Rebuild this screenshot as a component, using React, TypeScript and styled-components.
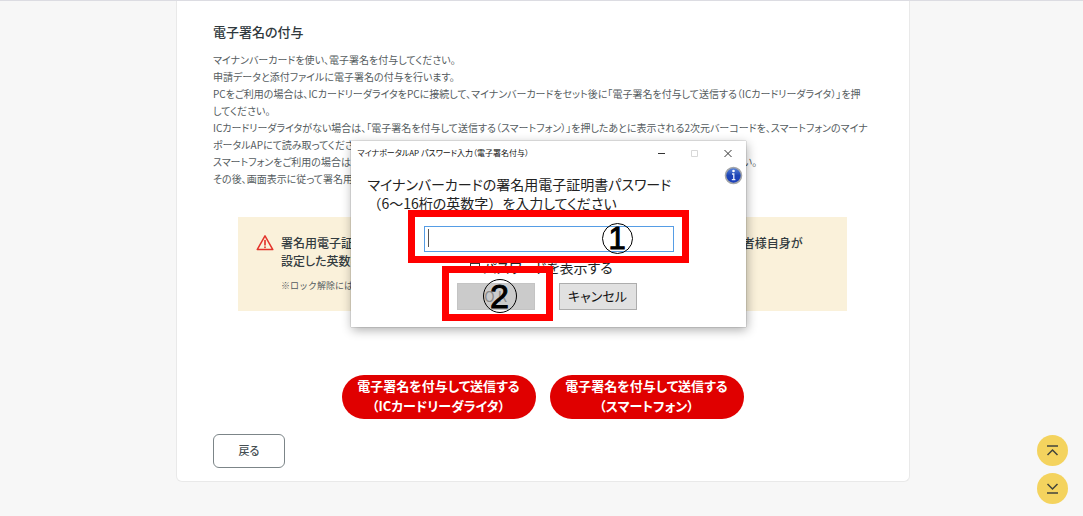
import React from "react";
import styled, { createGlobalStyle } from "styled-components";

const GlobalStyle = createGlobalStyle`
  *, *::before, *::after { box-sizing: border-box; }
  body {
    margin: 0;
    background: #f7f7f7;
    color: #555c60;
    font-family: "Noto Sans CJK JP", sans-serif;
    font-feature-settings: "palt";
  }
  button, input { font: inherit; font-feature-settings: inherit; }
  h1, h2, p { margin: 0; }
`;

const Page = styled.div`
  position: relative;
  min-height: 100vh;
  padding: 0 0 35px 3px;
  border-top: 1px solid #dcdce2;
`;

const Card = styled.main`
  max-width: 734px;
  margin: 0 auto;
  padding: 19px 37px 13px 36px;
  background: #fff;
  border: 1px solid #e9e9e9;
  border-top: 0;
  border-radius: 0 0 6px 6px;
`;

const Heading = styled.h1`
  margin-bottom: 8px;
  font-size: 13px;
  line-height: 23px;
  font-weight: 500;
  color: #2f383d;
`;

const Lead = styled.p`
  font-size: 10px;
  line-height: 17px;
  white-space: nowrap;
`;

const Notice = styled.section`
  display: flex;
  gap: 7px;
  margin: 30px 25px 64px;
  padding: 17px 18px 16px;
  min-height: 94px;
  background: #faf1da;
  color: #333c40;
  white-space: nowrap;
`;

const NoticeTitle = styled.p`
  font-size: 12px;
  line-height: 18px;
  font-weight: 500;
`;

const NoticeNote = styled.p`
  margin-top: 9px;
  font-size: 9px;
  line-height: 14px;
  font-feature-settings: normal;
  color: #555c60;
`;

const Actions = styled.div`
  display: flex;
  justify-content: center;
  gap: 14px;
`;

const SendButton = styled.button`
  width: 194px;
  height: 44px;
  padding: 0 0 2px;
  border: 0;
  border-radius: 22px;
  background: #e00000;
  color: #fff;
  font-size: 13px;
  line-height: 20px;
  font-weight: 700;
`;

const BackButton = styled.button`
  display: block;
  width: 72px;
  height: 34px;
  margin-top: 15px;
  padding: 0 0 2px;
  border: 1px solid #7c8588;
  border-radius: 6px;
  background: #fff;
  color: #454e52;
  font-size: 11px;
  font-weight: 500;
`;

const Floating = styled.nav`
  position: fixed;
  right: 15px;
  bottom: 12px;
  display: flex;
  flex-direction: column;
  gap: 7px;
`;

const RoundButton = styled.button`
  display: flex;
  align-items: center;
  justify-content: center;
  width: 31px;
  height: 31px;
  padding: 0;
  border: 0;
  border-radius: 50%;
  background: #f4d35e;
`;

const Dialog = styled.section`
  position: absolute;
  top: 140px;
  left: calc(50% - 191px);
  width: 395px;
  height: 186px;
  background: #fff;
  color: #222;
  box-shadow: 1px 3px 10px rgba(0, 0, 0, 0.32), 0 0 1px rgba(0, 0, 0, 0.5);
`;

const TitleBar = styled.header`
  display: flex;
  align-items: center;
  justify-content: space-between;
  height: 24px;
  padding: 0 13px 0 7px;
`;

const DialogTitle = styled.h2`
  font-size: 8px;
  line-height: 12px;
  font-weight: 400;
  color: #111;
`;

const WindowButtons = styled.div`
  display: flex;
  gap: 23px;
`;

const WindowButton = styled.button`
  display: flex;
  padding: 0;
  border: 0;
  background: none;
`;

const InfoButton = styled.button`
  position: absolute;
  top: 25px;
  right: 3px;
  display: flex;
  padding: 0;
  border: 0;
  background: none;
`;

const Form = styled.form`
  display: flex;
  flex-direction: column;
  padding: 10px 17px 0;
`;

const Prompt = styled.label`
  font-size: 14px;
  line-height: 19px;
  white-space: pre;
`;

const FullWidth = styled.span`
  font-feature-settings: normal;
`;

const PasswordField = styled.div`
  position: relative;
  width: 250px;
  margin: 13px 0 7px 56px;
`;

const PasswordInput = styled.input`
  display: block;
  width: 100%;
  height: 26px;
  padding: 0 6px;
  border: 1px solid #569de5;
  background: #fff;
  font-size: 15px;
  outline: 0;
`;

const Caret = styled.span`
  position: absolute;
  top: 3px;
  left: 4px;
  width: 1px;
  height: 18px;
  background: #555;
`;

const ShowPassword = styled.label`
  display: flex;
  align-items: center;
  gap: 4px;
  margin-left: 102px;
  font-size: 14px;
  line-height: 17px;
`;

const Checkbox = styled.input`
  appearance: none;
  width: 10px;
  height: 10px;
  margin: 0;
  border: 1px solid #333;
  background: #fff;
`;

const DialogActions = styled.div`
  display: flex;
  gap: 24px;
  margin: 7px 0 0 89px;
`;

const DialogButton = styled.button`
  width: 78px;
  height: 27px;
  padding: 0 0 2px;
  border: 1px solid #adadad;
  background: #e1e1e1;
  color: #111;
  font-size: 13px;
  line-height: 20px;
  &:disabled {
    border-color: #c4c4c4;
    background: #cbcbcb;
    color: #8a8a8a;
    font-size: 14px;
  }
`;

const Highlight = styled.div<{ $x: number; $y: number; $w: number; $h: number }>`
  position: absolute;
  left: ${(p) => p.$x}px;
  top: ${(p) => p.$y}px;
  width: ${(p) => p.$w}px;
  height: ${(p) => p.$h}px;
  border: 7px solid #f00;
  pointer-events: none;
`;

const StepNumber = styled.span<{ $x: number; $y: number; $size: number }>`
  position: absolute;
  left: ${(p) => p.$x}px;
  top: ${(p) => p.$y}px;
  display: flex;
  align-items: center;
  justify-content: center;
  width: ${(p) => p.$size}px;
  height: ${(p) => p.$size}px;
  border: 1px solid #000;
  border-radius: 50%;
  color: #000;
  font-family: "Liberation Sans", sans-serif;
  font-size: ${(p) => p.$size}px;
  line-height: 1;
  -webkit-text-stroke: 1px #000;
  pointer-events: none;
`;

const WarningIcon = () => (
  <svg width="18" height="17" viewBox="0 0 18 17" fill="none" stroke="#e3342b" strokeLinecap="round" strokeLinejoin="round">
    <path d="M9 1.800 16.800 15.600H1.200Z" strokeWidth="1.500" />
    <path d="M9 6.500v4.300" strokeWidth="1.700" />
    <path d="M9 13.200v.1" strokeWidth="1.800" />
  </svg>
);

const InfoIcon = () => (
  <svg width="19" height="19" viewBox="0 0 19 19">
    <defs>
      <linearGradient id="info" x1="0" y1="0" x2="0" y2="1">
        <stop offset="0" stopColor="#5d88dc" />
        <stop offset="0.5" stopColor="#1d45b5" />
        <stop offset="1" stopColor="#1c3fbd" />
      </linearGradient>
    </defs>
    <circle cx="9.5" cy="9.5" r="8" fill="url(#info)" stroke="#a3a5a8" strokeWidth="1.6" />
    <circle cx="9.5" cy="5" r="1.3" fill="#fff" />
    <path d="M8 8h1.800v5.400M7.800 13.600h3.600" fill="none" stroke="#e8eefc" strokeWidth="1.300" />
  </svg>
);

export default function App() {
  return (
    <>
      <GlobalStyle />
      <Page>
        <Card>
          <Heading>電子署名の付与</Heading>
          <Lead>
            マイナンバーカードを使い、電子署名を付与してください。<br />
            申請データと添付ファイルに電子署名の付与を行います。<br />
            PCをご利用の場合は、ICカードリーダライタをPCに接続して、マイナンバーカードをセット後に「電子署名を付与して送信する（ICカードリーダライタ）」を押<br />
            してください。<br />
            ICカードリーダライタがない場合は、「電子署名を付与して送信する（スマートフォン）」を押したあとに表示される2次元バーコードを、スマートフォンのマイナ<br />
            ポータルAPにて読み取ってください。<br />
            スマートフォンをご利用の場合は、「電子署名を付与して送信する（スマートフォン）」を押し、マイナポータルAPを起動してください。<br />
            その後、画面表示に従って署名用電子証明書の読み取りを行います。
          </Lead>
          <Notice>
            <WarningIcon />
            <div>
              <NoticeTitle>
                署名用電子証明書のパスワードは、マイナンバーカードのお受取時に市区町村窓口で、申請者様自身が<br />
                設定した英数字6～16桁の文字列です。
              </NoticeTitle>
              <NoticeNote>※ロック解除には市区町村窓口での手続きが必要です。</NoticeNote>
            </div>
          </Notice>
          <Actions>
            <SendButton>電子署名を付与して送信する<br />（ICカードリーダライタ）</SendButton>
            <SendButton>電子署名を付与して送信する<br />（スマートフォン）</SendButton>
          </Actions>
          <BackButton>戻る</BackButton>
        </Card>

        <Dialog role="dialog" aria-labelledby="dialog-title">
          <TitleBar>
            <DialogTitle id="dialog-title">マイナポータルAP パスワード入力（電子署名付与）</DialogTitle>
            <WindowButtons>
              <WindowButton aria-label="最小化">
                <svg width="10" height="10" viewBox="0 0 10 10" stroke="#333"><path d="M1 5.500h7" /></svg>
              </WindowButton>
              <WindowButton aria-label="最大化" disabled>
                <svg width="10" height="10" viewBox="0 0 10 10" fill="none" stroke="#d8d8d8"><path d="M1.500 2.500h6v6h-6z" /></svg>
              </WindowButton>
              <WindowButton aria-label="閉じる">
                <svg width="10" height="10" viewBox="0 0 10 10" stroke="#333"><path d="M1.500 2l7 7M8.500 2l-7 7" /></svg>
              </WindowButton>
            </WindowButtons>
          </TitleBar>
          <InfoButton aria-label="情報"><InfoIcon /></InfoButton>
          <Form onSubmit={(e) => e.preventDefault()}>
            <Prompt htmlFor="password">
              マイナンバーカードの署名用電子証明書パスワード<br />
              <FullWidth>（</FullWidth>6～16桁の英数字<FullWidth>）</FullWidth>を入力してください
            </Prompt>
            <PasswordField>
              <PasswordInput id="password" type="password" />
              <Caret />
            </PasswordField>
            <ShowPassword>
              <Checkbox type="checkbox" />
              パスワードを表示する
            </ShowPassword>
            <DialogActions>
              <DialogButton disabled>O K</DialogButton>
              <DialogButton type="button">キャンセル</DialogButton>
            </DialogActions>
          </Form>
          <Highlight $x={57} $y={69} $w={281} $h={53} />
          <Highlight $x={91} $y={125} $w={111} $h={55} />
          <StepNumber $x={251} $y={82} $size={31}>1</StepNumber>
          <StepNumber $x={132} $y={138} $size={34}>2</StepNumber>
        </Dialog>

        <Floating aria-label="ページ内移動">
          <RoundButton aria-label="ページの先頭へ">
            <svg width="13" height="13" viewBox="0 0 13 13" fill="none" stroke="#42443c" strokeWidth="1.5"><path d="M1 2h11M1.500 11 6.500 6l5 5" /></svg>
          </RoundButton>
          <RoundButton aria-label="ページの末尾へ">
            <svg width="13" height="13" viewBox="0 0 13 13" fill="none" stroke="#42443c" strokeWidth="1.5"><path d="M1 11h11M1.500 2 6.500 7l5-5" /></svg>
          </RoundButton>
        </Floating>
      </Page>
    </>
  );
}
